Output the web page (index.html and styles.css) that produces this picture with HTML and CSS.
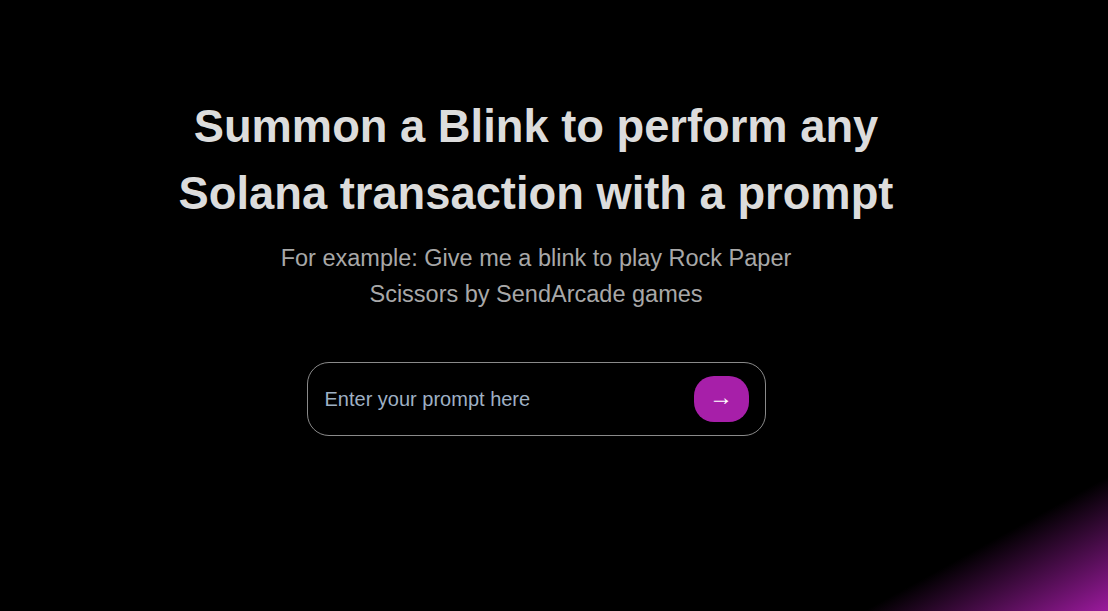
FILE: index.html
```html
<!DOCTYPE html>
<html lang="en">
<head>
<meta charset="utf-8">
<title>Blink</title>
<link rel="stylesheet" href="styles.css">
</head>
<body>
<main class="hero">
  <h1 class="title">Summon a Blink to perform any Solana transaction with a prompt</h1>
  <p class="subtitle">For example: Give me a blink to play Rock Paper Scissors by SendArcade games</p>
  <form class="prompt">
    <input class="prompt-input" type="text" placeholder="Enter your prompt here">
    <button class="prompt-btn" type="button">&rarr;</button>
  </form>
</main>
</body>
</html>
```

FILE: styles.css
```css
html, body {
  margin: 0;
  height: 100%;
}
body {
  background: linear-gradient(to bottom right, #000 89%, #9a1a9c 100%);
  font-family: "Liberation Sans", Arial, sans-serif;
  overflow: hidden;
}
.hero {
  display: flex;
  flex-direction: column;
  align-items: center;
  padding: 93px 36px 0 0;
}
.title {
  margin: 0;
  max-width: 760px;
  text-align: center;
  font-size: 45.3px;
  font-weight: 700;
  line-height: 67px;
  color: #dcdcdc;
}
.subtitle {
  margin: 13px 0 0;
  max-width: 560px;
  text-align: center;
  font-size: 23.5px;
  line-height: 36px;
  color: #a8a8a8;
}
.prompt {
  margin-top: 50px;
  width: 459px;
  height: 74px;
  box-sizing: border-box;
  border: 1px solid #8a8a8a;
  border-radius: 22px;
  display: flex;
  align-items: center;
  padding: 0 16px 0 17px;
}
.prompt-input {
  flex: 1;
  min-width: 0;
  background: transparent;
  border: none;
  outline: none;
  font-family: "Liberation Sans", Arial, sans-serif;
  font-size: 20px;
  color: #ddd;
  padding: 0;
}
.prompt-input::placeholder {
  color: #9fb0c4;
}
.prompt-btn {
  width: 55px;
  height: 46px;
  border: none;
  border-radius: 20px;
  background: #a71fa9;
  color: #fff;
  font-size: 24px;
  font-family: "Liberation Sans", Arial, sans-serif;
  padding: 0 0 4px;
  line-height: 1;
  display: flex;
  align-items: center;
  justify-content: center;
}
```
